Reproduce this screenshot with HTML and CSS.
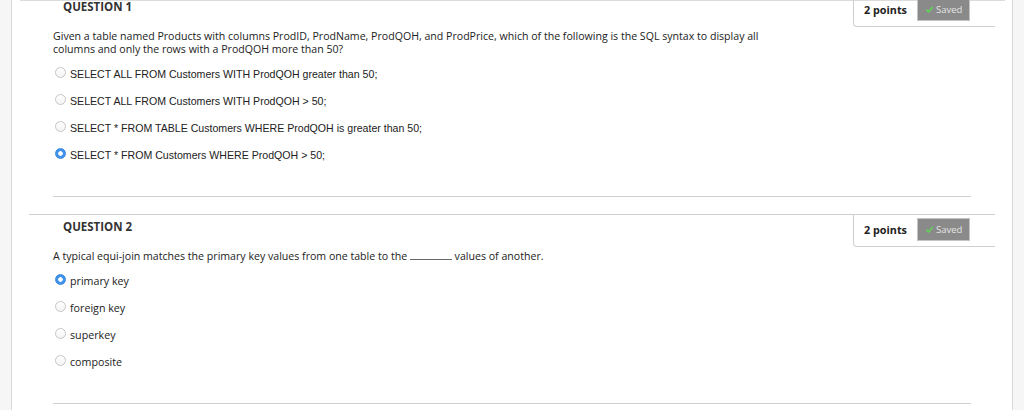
FILE: index.html
```html
<!DOCTYPE html>
<html>
<head>
<meta charset="utf-8">
<link rel="stylesheet" href="styles.css">
</head>
<body>
<div class="side side-left"></div>
<div class="main">
  <div class="page">
    <div class="questions">
      <div class="question">
        <div class="q-head">
          <div class="q-title">QUESTION 1</div>
          <div class="points-box">
            <span class="points">2 points</span>
            <span class="saved"><svg class="check" viewBox="0 0 10 10" width="9" height="9"><path d="M1.5 5.2 L4 7.6 L8.6 2.2" fill="none" stroke="#5fd35a" stroke-width="1.8"/></svg>Saved</span>
          </div>
        </div>
        <div class="q-body">
          <div class="q-text">Given a table named Products with columns ProdID, ProdName, ProdQOH, and ProdPrice, which of the following is the SQL syntax to display all columns and only the rows with a ProdQOH more than 50?</div>
          <div class="options sans">
            <div class="option"><span class="radio"></span><span>SELECT ALL FROM Customers WITH ProdQOH greater than 50;</span></div>
            <div class="option"><span class="radio"></span><span>SELECT ALL FROM Customers WITH ProdQOH &gt; 50;</span></div>
            <div class="option"><span class="radio"></span><span>SELECT * FROM TABLE Customers WHERE ProdQOH is greater than 50;</span></div>
            <div class="option"><span class="radio checked"></span><span>SELECT * FROM Customers WHERE ProdQOH &gt; 50;</span></div>
          </div>
          <div class="sep"></div>
        </div>
      </div>
      <div class="question">
        <div class="q-head">
          <div class="q-title">QUESTION 2</div>
          <div class="points-box">
            <span class="points">2 points</span>
            <span class="saved"><svg class="check" viewBox="0 0 10 10" width="9" height="9"><path d="M1.5 5.2 L4 7.6 L8.6 2.2" fill="none" stroke="#5fd35a" stroke-width="1.8"/></svg>Saved</span>
          </div>
        </div>
        <div class="q-body">
          <div class="q-text">A typical equi-join matches the primary key values from one table to the <span class="blank"></span> values of another.</div>
          <div class="options">
            <div class="option"><span class="radio checked"></span><span>primary key</span></div>
            <div class="option"><span class="radio"></span><span>foreign key</span></div>
            <div class="option"><span class="radio"></span><span>superkey</span></div>
            <div class="option"><span class="radio"></span><span>composite</span></div>
          </div>
          <div class="sep"></div>
        </div>
      </div>
    </div>
  </div>
</div>
<div class="side side-right"></div>
</body>
</html>
```
FILE: styles.css
```css
html, body {
  margin: 0;
  padding: 0;
  background: #fff;
}
body {
  display: flex;
  height: 410px;
  overflow: hidden;
  font-family: "Open Sans", "Noto Sans", sans-serif;
  color: #222;
}
.side {
  background: #f6f6f6;
  flex: none;
}
.side-left {
  width: 11px;
  border-right: 1px solid #d9d9d9;
}
.side-right {
  width: 11px;
  border-left: 1px solid #d9d9d9;
}
.main {
  flex: 1;
  padding: 0 7px 0 8px;
  overflow: hidden;
}
.page {
  border-top: 1px solid #dcdcdc;
}
.questions {
  margin-top: -7px;
}
.question {
  margin: 0 10px 17px 9px;
  border-top: 1px solid #cfcfcf;
}
.q-head {
  display: flex;
  align-items: flex-start;
}
.q-title {
  padding-left: 34px;
  margin-top: 4px;
  font-weight: 700;
  font-size: 11.5px;
  line-height: 16px;
  color: #333;
}
.points-box {
  margin-left: auto;
  display: flex;
  align-items: center;
  gap: 10px;
  padding: 3px 25px 5px 10px;
  border-left: 1px solid #cfcfcf;
  border-bottom: 1px solid #cfcfcf;
  border-bottom-left-radius: 4px;
}
.points {
  font-weight: 700;
  font-size: 10.8px;
  color: #222;
}
.saved {
  box-sizing: border-box;
  width: 53px;
  height: 23px;
  display: flex;
  align-items: center;
  padding-left: 7px;
  gap: 2px;
  background: #8a8a8a;
  border: 1px solid #c4c4c4;
  color: #e4e4e4;
  font-size: 9.5px;
}
.q-body {
  padding: 3px 24px 0 24px;
}
.q-text {
  font-size: 10.6px;
  line-height: 13px;
  max-width: 716px;
}
.blank {
  display: inline-block;
  width: 42px;
  border-bottom: 1px solid #666;
  vertical-align: baseline;
}
.options {
  margin-top: 4px;
  font-size: 10.7px;
}
.options.sans {
  font-family: "Liberation Sans", Arial, sans-serif;
  font-size: 10.6px;
}
.option {
  display: flex;
  align-items: center;
  height: 27px;
}
.radio {
  box-sizing: border-box;
  width: 11px;
  height: 11px;
  border-radius: 50%;
  border: 1px solid #c6c6c6;
  background: linear-gradient(#fff, #f3f3f3);
  margin: 0 4px 0 2px;
  flex: none;
  position: relative;
  top: -1px;
}
.radio.checked {
  border-color: #3a8ae0;
  background: radial-gradient(circle, #fff 0 2px, #3f93ea 2.5px);
}
.sep {
  margin-top: 28px;
  border-top: 1px solid #d0d0d0;
}
```
